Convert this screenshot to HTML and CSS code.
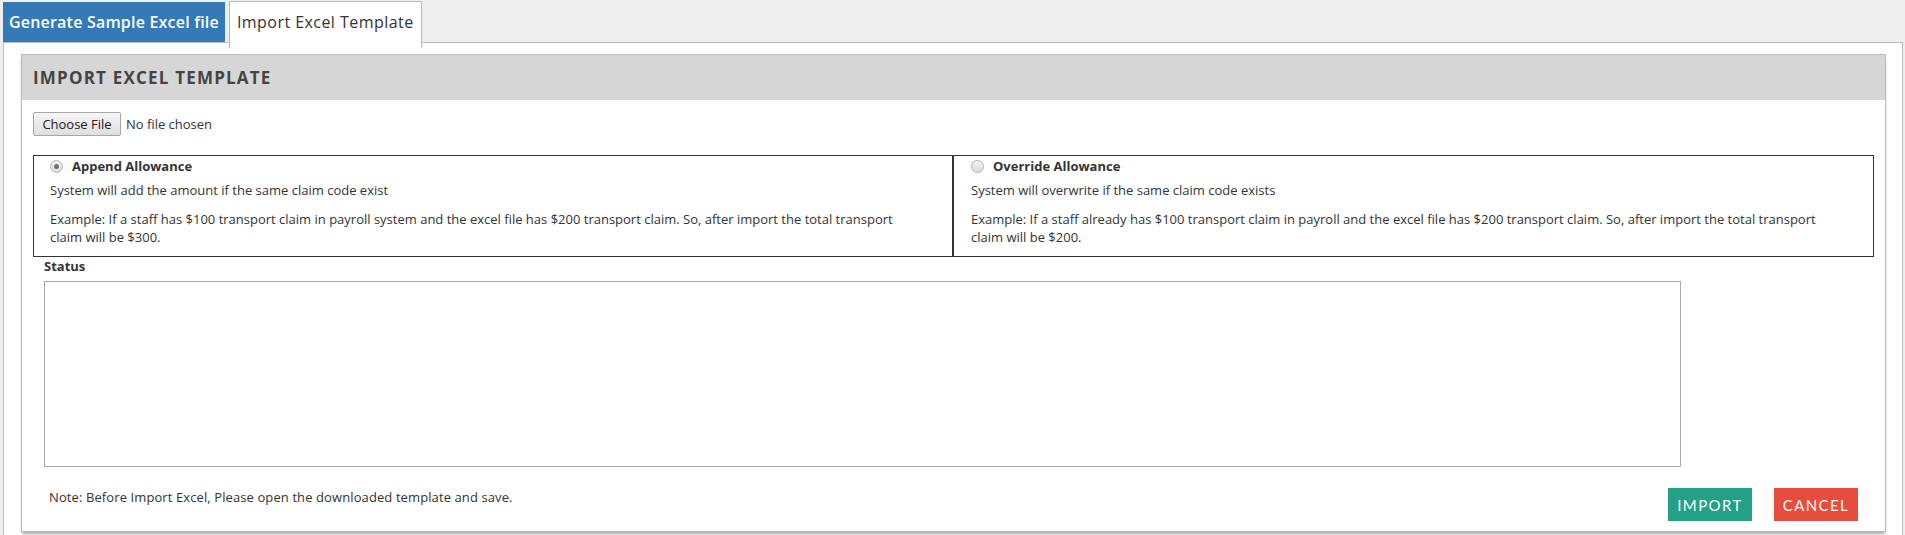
FILE: index.html
```html
<!DOCTYPE html>
<html>
<head>
<meta charset="utf-8">
<title>Import Excel Template</title>
<link rel="stylesheet" href="styles.css">
</head>
<body>
<div class="tabs">
  <div class="tab tab-blue">Generate Sample Excel file</div>
  <div class="tab tab-current">Import Excel Template</div>
</div>
<div class="panel">
  <div class="section">
    <div class="section-head">IMPORT EXCEL TEMPLATE</div>
    <div class="section-body">
      <div class="file-row">
        <button class="file-btn" type="button">Choose File</button>
        <span class="file-name">No file chosen</span>
      </div>
      <div class="options">
        <div class="option">
          <div class="option-title"><span class="radio checked"></span>Append Allowance</div>
          <p class="option-desc">System will add the amount if the same claim code exist</p>
          <p class="option-example">Example: If a staff has $100 transport claim in payroll system and the excel file has $200 transport claim. So, after import the total transport claim will be $300.</p>
        </div>
        <div class="option">
          <div class="option-title"><span class="radio"></span>Override Allowance</div>
          <p class="option-desc">System will overwrite if the same claim code exists</p>
          <p class="option-example">Example: If a staff already has $100 transport claim in payroll and the excel file has $200 transport claim. So, after import the total transport claim will be $200.</p>
        </div>
      </div>
      <div class="status">
        <div class="status-label">Status</div>
        <div class="status-box"></div>
      </div>
      <div class="footer">
        <div class="note">Note: Before Import Excel, Please open the downloaded template and save.</div>
        <div class="actions">
          <button class="btn btn-import" type="button">IMPORT</button>
          <button class="btn btn-cancel" type="button">CANCEL</button>
        </div>
      </div>
    </div>
  </div>
</div>
</body>
</html>
```
FILE: styles.css
```css
html, body {
  margin: 0;
  padding: 0;
}
body {
  background: #eeeeee;
  font-family: "Open Sans", "Liberation Sans", sans-serif;
  color: #333;
  font-size: 13px;
  height: 535px;
  overflow: hidden;
}
.tabs {
  display: flex;
  align-items: flex-end;
  gap: 4px;
  padding: 1px 3px 0;
}
.tab {
  height: 40px;
  line-height: 40px;
  font-size: 16px;
  white-space: nowrap;
}
.tab-blue {
  background: #337ab7;
  color: #fff;
  font-weight: 600;
  letter-spacing: 0.2px;
  padding: 0 6px 0 6px;
}
.tab-current {
  position: relative;
  z-index: 1;
  background: #fff;
  color: #333;
  letter-spacing: 0.45px;
  border: 1px solid #bbb;
  border-bottom: none;
  padding: 0 7px 6px 7px;
  margin-bottom: -6px;
}
.panel {
  margin: 0 2px 0 3px;
  background: #fff;
  border: 1px solid #bbb;
  padding: 11px 16px 0 17px;
  height: 600px;
}
.section {
  border: 1px solid #bbb;
  box-shadow: 0 3px 3px -1px rgba(0,0,0,0.35);
}
.section-head {
  background: #d6d6d6;
  height: 45px;
  line-height: 46px;
  padding-left: 11px;
  font-size: 17px;
  font-weight: 700;
  letter-spacing: 1.2px;
  color: #444;
}
.section-body {
  padding: 12px 11px 10px;
}
.file-row {
  display: flex;
  align-items: center;
  gap: 5px;
  height: 24px;
}
.file-btn {
  height: 24px;
  width: 88px;
  padding: 0;
  font-family: "Open Sans", "Liberation Sans", sans-serif;
  font-size: 13px;
  color: #222;
  background: linear-gradient(#f6f6f6, #dedede);
  border: 1px solid #a6a6a6;
  border-radius: 2px;
}
.file-name {
  font-size: 13px;
  color: #333;
}
.options {
  display: flex;
  margin-top: 19px;
}
.option {
  flex: 1 1 0;
  border: 1px solid #333;
  padding: 0 16px 0 16px;
}
.option + .option {
  padding-left: 17px;
}
.option-title {
  display: flex;
  align-items: center;
  font-size: 13px;
  font-weight: 700;
  line-height: 18px;
  margin-top: 1px;
}
.radio {
  width: 13px;
  height: 13px;
  box-sizing: border-box;
  border: 1px solid #b4b4b4;
  border-radius: 50%;
  background: linear-gradient(#f2f2f2, #dcdcdc);
  margin-right: 9px;
  position: relative;
}
.radio.checked::after {
  content: "";
  position: absolute;
  left: 3px;
  top: 3px;
  width: 5px;
  height: 5px;
  border-radius: 50%;
  background: #6f6f6f;
}
.option-desc {
  margin: 6px 0 0;
  line-height: 18px;
}
.option-example {
  margin: 11px 0 10px;
  line-height: 18px;
  padding-right: 8px;
}
.status {
  padding-left: 11px;
}
.status-label {
  font-weight: 700;
  line-height: 17px;
  margin-top: 1px;
}
.status-box {
  width: 1637px;
  height: 186px;
  box-sizing: border-box;
  border: 1px solid #aaa;
  margin-top: 6px;
}
.footer {
  display: flex;
  justify-content: space-between;
  align-items: flex-start;
  padding: 0 16px;
  margin-top: 21px;
}
.note {
  line-height: 17px;
  margin-top: 1px;
  letter-spacing: 0.1px;
}
.actions {
  display: flex;
  gap: 22px;
}
.btn {
  width: 84px;
  height: 33px;
  border: none;
  border-radius: 0;
  color: #fff;
  font-family: Lato, "Open Sans", sans-serif;
  font-size: 15px;
  letter-spacing: 1.4px;
  padding: 0;
}
.btn-import {
  background: #23a086;
}
.btn-cancel {
  background: #e74c3c;
}
```
